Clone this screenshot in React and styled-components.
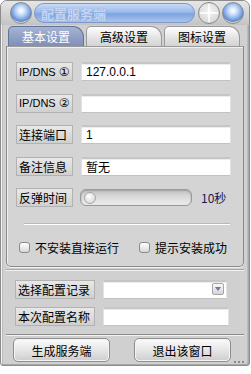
import React from 'react';
import styled, { createGlobalStyle } from 'styled-components';

const Global = createGlobalStyle`
  html, body { margin: 0; padding: 0; background: #ffffff; }
  body { font-family: "Noto Sans CJK SC", "Liberation Sans", sans-serif; font-size: 12px; color: #000; }
`;

const Window = styled.div`
  width: 250px;
  height: 366px;
  box-sizing: border-box;
  background: #d0d0d0;
  border: 1px solid #8c8c8c;
  border-radius: 7px 7px 3px 3px;
  box-shadow: inset 1px 1px 0 #f4f4f4, inset -1px -1px 0 #a8a8a8, inset 2px 0 0 #bcbcbc, inset -2px 0 0 #bcbcbc;
  display: flex;
  flex-direction: column;
  position: relative;
  overflow: hidden;
`;

const TitleBar = styled.div`
  height: 24px;
  display: flex;
  align-items: center;
  gap: 2px;
  padding: 0 5px 0 9px;
  background: linear-gradient(#e6e6e6, #c4c4c4);
`;

const Orb = styled.div`
  width: 22px;
  height: 22px;
  flex: none;
  border-radius: 50%;
  box-sizing: border-box;
  border: 1px solid #8a8a8a;
  background: ${(p) =>
    p.$blue
      ? 'radial-gradient(circle at 50% 38%, #ffffff 0, #d6e6fb 22%, #7ea6e4 55%, #5c86cc 68%, #cfcfcf 72%, #f2f2f2 100%)'
      : 'radial-gradient(circle at 50% 40%, #f4f4f4, #cfcfcf)'};
  position: relative;
`;

const Cross = styled.svg`
  position: absolute;
  inset: 0;
`;

const TitlePill = styled.div`
  flex: 1;
  height: 20px;
  margin: 0 1px 0 0;
  border-radius: 10px;
  border: 1px solid #7f98c8;
  box-sizing: border-box;
  background: linear-gradient(#c8dbf6 0%, #9bbaea 45%, #7ea3e0 55%, #a9c4ee 100%);
  display: flex;
  align-items: center;
  padding-left: 6px;
  color: #c6d6f2;
  font-weight: bold;
  font-size: 13px;
  text-shadow: 0 0 1px #7f9bd0;
`;

const TabRow = styled.div`
  height: 21px;
  display: flex;
  align-items: flex-end;
  padding-left: 7px;
  gap: 2px;
`;

const Tab = styled.div`
  width: 76px;
  height: 20px;
  box-sizing: border-box;
  display: flex;
  align-items: center;
  justify-content: center;
  font-size: 12px;
  border: 1px solid ${(p) => (p.$active ? '#65749a' : '#9a9a9a')};
  border-bottom: none;
  border-radius: 5px 11px 0 0;
  color: ${(p) => (p.$active ? '#ffffff' : '#000000')};
  background: ${(p) =>
    p.$active
      ? 'linear-gradient(#a6b3d3, #7f8fb7)'
      : 'linear-gradient(#ffffff, #e2e2e2 60%, #d4d4d4)'};
`;

const Panel = styled.div`
  margin: 0 5px;
  height: 221px;
  box-sizing: border-box;
  border: 1px solid #8a8a8a;
  border-top: 1px solid #9a9a9a;
  border-radius: 0 0 5px 5px;
  box-shadow: inset 1px 1px 0 #efefef, 0 1px 0 #f0f0f0;
  background: #d4d4d4;
  padding: 15px 13px 0 9px;
  display: flex;
  flex-direction: column;
`;

const Rows = styled.div`
  display: flex;
  flex-direction: column;
  gap: 12.5px;
`;

const Row = styled.div`
  display: flex;
  align-items: center;
  height: 19px;
  gap: ${(p) => p.$gap || 8}px;
`;

const Label = styled.div`
  width: ${(p) => p.$w || 57}px;
  height: 19px;
  box-sizing: border-box;
  flex: none;
  border: 1px solid #b2b2b2;
  background: linear-gradient(#e8e8e8, #d0d0d0);
  display: flex;
  align-items: center;
  padding-left: 2px;
  font-size: ${(p) => (p.$latin ? 11 : 12)}px;
  font-family: ${(p) => (p.$latin ? '"Liberation Sans", Arial, sans-serif' : 'inherit')};
  white-space: nowrap;
`;

const Circled = styled.span`
  font-family: "DejaVu Sans", sans-serif;
  font-size: 12px;
  margin-left: 3px;
`;

const Field = styled.div`
  width: ${(p) => p.$w || 150}px;
  height: 19px;
  box-sizing: border-box;
  flex: none;
  background: #ffffff;
  border-top: 2px solid #c6c6c6;
  border-left: 1px solid #e2e2e2;
  border-right: 1px solid #e2e2e2;
  border-bottom: 1px solid #c2c2c2;
  box-shadow: inset 0 1px 0 #ececec;
  display: flex;
  align-items: center;
  padding-left: 4px;
  font-family: "Liberation Sans", "Noto Sans CJK SC", sans-serif;
  font-size: 12px;
  position: relative;
`;

const Track = styled.div`
  width: 112px;
  height: 17px;
  box-sizing: border-box;
  border-radius: 6px;
  border: 1px solid #9a9a9a;
  background: linear-gradient(#c4c4c4, #dcdcdc 50%, #ececec);
  box-shadow: inset 0 1px 2px #a0a0a0;
  display: flex;
  align-items: center;
  padding-left: 3px;
`;

const Thumb = styled.div`
  width: 10px;
  height: 10px;
  border-radius: 50%;
  background: radial-gradient(circle at 40% 35%, #ffffff, #d0d0d0);
  border: 1px solid #a8a8a8;
`;

const Seconds = styled.span`
  font-size: 12px;
  color: #1c1650;
  margin-left: 2px;
`;

const Separator = styled.div`
  margin: 16px 0 0 8px;
  height: 1px;
  background: #ffffff;
  border-top: 1px solid #b8b8b8;
`;

const Checks = styled.div`
  display: flex;
  margin-top: 14px;
  padding-left: 3px;
  gap: 20px;
`;

const Check = styled.label`
  display: flex;
  flex: none;
  align-items: center;
  gap: 5px;
  font-size: 12px;
  white-space: nowrap;
`;

const Box = styled.span`
  width: 11px;
  height: 11px;
  box-sizing: border-box;
  border-radius: 3px;
  border: 1px solid #8a8a8a;
  background: linear-gradient(#ffffff, #d8d8d8);
`;

const Section = styled.div`
  margin: 2px 5px 0;
  height: 66px;
  box-sizing: border-box;
  border-top: 1px solid #a8a8a8;
  border-bottom: 1px solid #8a8a8a;
  box-shadow: inset 0 1px 0 #f2f2f2, 0 1px 0 #f2f2f2;
  padding: 10px 0 0 9px;
  display: flex;
  flex-direction: column;
  gap: 8px;
`;

const Drop = styled.span`
  position: absolute;
  right: 2px;
  top: 1px;
  width: 12px;
  height: 12px;
  box-sizing: border-box;
  border: 1px solid #a6a6a6;
  border-radius: 2px;
  background: linear-gradient(#fafafa, #d4d4d4);
  display: flex;
  align-items: center;
  justify-content: center;
`;

const Buttons = styled.div`
  display: flex;
  padding: 3px 0 0 12px;
  gap: 24px;
`;

const Button = styled.button`
  width: 97px;
  height: 24px;
  border-radius: 5px;
  border: 1px solid #8e8e8e;
  background: linear-gradient(#fbfbfb, #e4e4e4 55%, #cdcdcd);
  box-shadow: inset 0 0 0 1px #f4f4f4;
  font-family: "Noto Sans CJK SC", sans-serif;
  font-size: 12px;
  color: #000;
  padding: 0;
`;

const Grip = styled.svg`
  position: absolute;
  right: 1px;
  bottom: 1px;
`;

export default function App() {
  return (
    <>
      <Global />
      <Window>
        <TitleBar>
          <Orb $blue />
          <TitlePill>配置服务端</TitlePill>
          <Orb>
            <Cross width="20" height="20" viewBox="0 0 20 20">
              <path d="M10 1v18M1 10h18" stroke="#ffffff" strokeWidth="1.6" />
            </Cross>
          </Orb>
          <Orb $blue />
        </TitleBar>
        <TabRow>
          <Tab $active>基本设置</Tab>
          <Tab>高级设置</Tab>
          <Tab>图标设置</Tab>
        </TabRow>
        <Panel>
          <Rows>
            <Row>
              <Label $latin>IP/DNS<Circled>①</Circled></Label>
              <Field>127.0.0.1</Field>
            </Row>
            <Row>
              <Label $latin>IP/DNS<Circled>②</Circled></Label>
              <Field />
            </Row>
            <Row>
              <Label>连接端口</Label>
              <Field>1</Field>
            </Row>
            <Row>
              <Label>备注信息</Label>
              <Field>暂无</Field>
            </Row>
            <Row $gap={7}>
              <Label>反弹时间</Label>
              <Track><Thumb /></Track>
              <Seconds>10秒</Seconds>
            </Row>
          </Rows>
          <Separator />
          <Checks>
            <Check><Box />不安装直接运行</Check>
            <Check><Box />提示安装成功</Check>
          </Checks>
        </Panel>
        <Section>
          <Row>
            <Label $w={80}>选择配置记录</Label>
            <Field $w={124}>
              <Drop>
                <svg width="6" height="4" viewBox="0 0 6 4"><path d="M0 0h6L3 4z" fill="#6a78a0" /></svg>
              </Drop>
            </Field>
          </Row>
          <Row>
            <Label $w={80}>本次配置名称</Label>
            <Field $w={126} />
          </Row>
        </Section>
        <Buttons>
          <Button>生成服务端</Button>
          <Button>退出该窗口</Button>
        </Buttons>
        <Grip width="16" height="6" viewBox="0 0 16 6">
          <g fill="#8a8a8a">
            <rect x="2" y="3" width="2" height="2" />
            <rect x="6" y="3" width="2" height="2" />
            <rect x="10" y="3" width="2" height="2" />
          </g>
        </Grip>
      </Window>
    </>
  );
}
